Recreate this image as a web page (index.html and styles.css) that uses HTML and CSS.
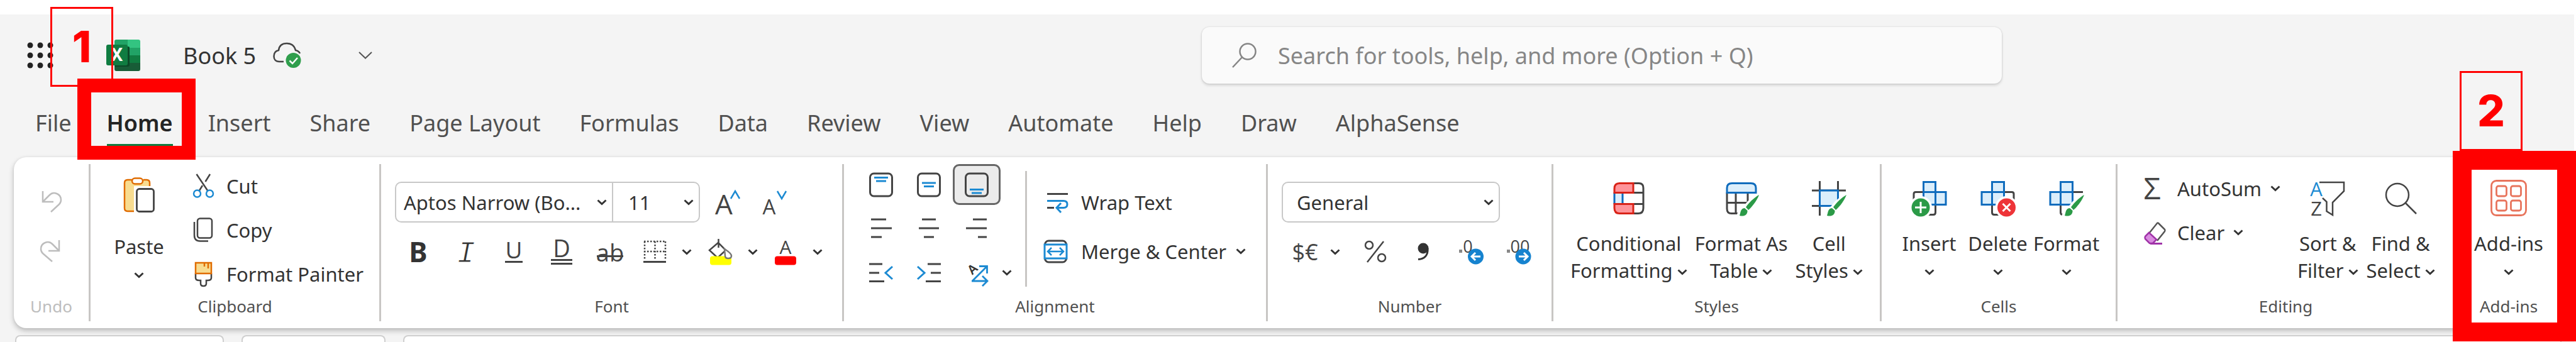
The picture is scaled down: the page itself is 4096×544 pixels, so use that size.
FILE: index.html
```html
<!DOCTYPE html>
<html lang="en">
<head>
<meta charset="utf-8">
<title>Book 5</title>
<link rel="stylesheet" href="styles.css">
</head>
<body>
<svg class="defs" aria-hidden="true">
  <symbol id="chev" viewBox="0 0 16 10"><path d="M1.5 1.5 8 7.5 14.5 1.5" fill="none" stroke="#333" stroke-width="3"/></symbol>
  <symbol id="brush" viewBox="0 0 56 58">
    <path d="M56 24 40 37 32 47 38 51 46 42Z M32 46C26 46 26 52 24 57 31 59 38 56 38 50Z" fill="#fff" stroke="#fff" stroke-width="7"/>
    <path d="M56 24C50 27 40 36 35 43.500L39 48C46 42 53 32 56 24Z" fill="#2b9a47"/>
    <path d="M33 45C26 46 27 52 25 57 32 59 38 56 37.500 49Z" fill="#2b9a47"/>
  </symbol>
</svg>

<div class="app">
  <header class="title">
    <div class="title-left">
      <button class="waffle" aria-label="App launcher">
        <svg width="42" height="42" viewBox="0 0 42 42" fill="#222"><circle cx="5" cy="5" r="4.500"/><circle cx="21" cy="5" r="4.500"/><circle cx="37" cy="5" r="4.500"/><circle cx="5" cy="21" r="4.500"/><circle cx="21" cy="21" r="4.500"/><circle cx="37" cy="21" r="4.500"/><circle cx="5" cy="37" r="4.500"/><circle cx="21" cy="37" r="4.500"/><circle cx="37" cy="37" r="4.500"/></svg>
      </button>
      <svg class="logo" width="54" height="50" viewBox="0 0 54 50">
        <path d="M16 0H34V13H13V3Q13 0 16 0Z" fill="#21a366"/><path d="M34 0H51Q54 0 54 3V13H34Z" fill="#33c481"/>
        <path d="M13 13H34V25H13Z" fill="#107c41"/><path d="M34 13H54V25H34Z" fill="#21a366"/>
        <path d="M34 25H54V37H34Z" fill="#107c41"/><path d="M13 25H34V37H54V47Q54 50 51 50H16Q13 50 13 47Z" fill="#185c37"/>
        <path d="M13 11H35Q37 11 37 13V40Q37 43 34 43H13Z" fill="#0b4a28"/>
        <rect y="8" width="34" height="33" rx="3" fill="#107c41"/>
        <text x="17" y="34" text-anchor="middle" class="logo-x">X</text>
      </svg>
      <span class="book">Book 5</span>
      <svg class="cloud" width="46" height="42" viewBox="0 0 46 42">
        <path d="M43 18Q41 14 36 13C34 5 29 2 22 2S10 5 9 13C4 14 1.500 18 1.500 22.500S4 31 10 31H17" fill="none" stroke="#444" stroke-width="2.500"/>
        <circle cx="32.500" cy="29" r="12" fill="#2f9e4c"/><path d="M26.500 29.500 31 34 39 25" fill="none" stroke="#fff" stroke-width="2.500"/>
      </svg>
      <button class="plain" aria-label="File menu"><svg width="22" height="12" viewBox="0 0 22 12"><path d="M1 1 11 10.500 21 1" fill="none" stroke="#555" stroke-width="2"/></svg></button>
    </div>
    <label class="search">
      <svg width="40" height="42" viewBox="0 0 40 42" fill="none" stroke="#858585" stroke-width="2.500"><circle cx="26" cy="15" r="12.500"/><path d="M17 24 2 40"/></svg>
      <input type="text" placeholder="Search for tools, help, and more (Option + Q)" aria-label="Search">
    </label>
  </header>

  <nav class="tabs">
    <button>File</button><button class="active">Home</button><button>Insert</button><button>Share</button><button>Page Layout</button><button>Formulas</button><button>Data</button><button>Review</button><button>View</button><button>Automate</button><button>Help</button><button>Draw</button><button>AlphaSense</button>
  </nav>

  <main class="ribbon">
    <section class="group undo">
      <div class="body">
        <button aria-label="Undo"><svg width="40" height="40" viewBox="0 0 40 40" fill="none" stroke="#bdbdbd" stroke-width="2.500"><path d="M6 3V20H23"/><path d="M6 20 17 9C23 3 35 7 35 17Q35 21 32 24L19 36"/></svg></button>
        <button aria-label="Redo"><svg width="40" height="40" viewBox="0 0 40 40" fill="none" stroke="#bdbdbd" stroke-width="2.500"><path d="M32 3V20H15"/><path d="M32 20 21 9C15 3 3 7 3 17Q3 21 6 24L21 37"/></svg></button>
      </div>
      <h2>Undo</h2>
    </section>

    <section class="group clipboard">
      <div class="body">
        <button class="big paste">
          <svg width="56" height="56" viewBox="0 0 56 56"><path d="M10 4H41Q46 4 46 9V55H10Q5 55 5 50V9Q5 4 10 4Z" fill="#f8dc90"/><path d="M17 4H10Q5 4 5 9V49Q5 54 10 54H21M35 4H40Q45 4 45 9V14" fill="none" stroke="#e06c00" stroke-width="2.500"/><rect x="17" y="1.500" width="17" height="9" rx="4.500" fill="#fff" stroke="#e06c00" stroke-width="2.500"/><path d="M20 14H56V56H20Z" fill="#fff"/><rect x="24.500" y="18.500" width="27" height="36" rx="4" fill="#fff" stroke="#444" stroke-width="2.800"/></svg>
          <span>Paste</span>
          <span class="line"><svg class="chev"><use href="#chev"/></svg></span>
        </button>
        <div class="stack">
          <button><svg width="40" height="40" viewBox="0 0 40 40" fill="none" stroke-width="2.500"><path d="M7.500 1 25 27M29 1 21.500 13M17 19 12 27" stroke="#444"/><circle cx="8.500" cy="32" r="5.500" stroke="#1c8ad2"/><circle cx="28.500" cy="32" r="5.500" stroke="#1c8ad2"/></svg>Cut</button>
          <button><svg width="40" height="40" viewBox="0 0 40 40" fill="none" stroke="#444" stroke-width="2.500"><rect x="9" y="1.500" width="23" height="31" rx="4"/><path d="M4 7V28Q4 37.500 13 37.500H26"/></svg>Copy</button>
          <button><svg width="40" height="40" viewBox="0 0 40 40" fill="none" stroke-width="2.500"><path d="M6 19V26Q6 30 12 30H14V35Q14 39 18.500 39T23 35V30H25Q31 30 31 26V19" stroke="#444"/><rect x="6" y="2" width="25" height="17" fill="#f8dc90" stroke="#e06c00"/><path d="M20 2V8M26 2V11" stroke="#e06c00"/></svg>Format Painter</button>
        </div>
      </div>
      <h2>Clipboard</h2>
    </section>

    <section class="group font">
      <div class="body">
        <div class="row">
          <div class="pair">
            <select class="face" aria-label="Font"><option>Aptos Narrow (Bo...</option></select>
            <select class="size" aria-label="Font size"><option>11</option></select>
          </div>
          <button class="grow" aria-label="Increase font size"><svg width="42" height="40" viewBox="0 0 42 40"><text x="14" y="39" class="lt" font-size="44" text-anchor="middle">A</text><path d="M25 14 32 2 39 14" fill="none" stroke="#1c8ad2" stroke-width="2.500"/></svg></button>
          <button aria-label="Decrease font size"><svg width="42" height="40" viewBox="0 0 42 40"><text x="11" y="39" class="lt" font-size="33" text-anchor="middle">A</text><path d="M24 2 31 14 38 2" fill="none" stroke="#1c8ad2" stroke-width="2.500"/></svg></button>
        </div>
        <div class="row tools">
          <button aria-label="Bold"><svg width="40" height="42" viewBox="0 0 40 42"><text x="20" y="37" class="bd" font-size="44" text-anchor="middle">B</text></svg></button>
          <button aria-label="Italic"><svg width="40" height="42" viewBox="0 0 40 42"><text x="20" y="37" class="it" font-size="48" text-anchor="middle">I</text></svg></button>
          <button aria-label="Underline"><svg width="40" height="42" viewBox="0 0 40 42"><text x="20" y="31" class="lt" font-size="37" text-anchor="middle">U</text><path d="M6 36.500H34" stroke="#444" stroke-width="3"/></svg></button>
          <button aria-label="Double underline"><svg width="40" height="42" viewBox="0 0 40 42"><text x="20" y="29" class="lt" font-size="38" text-anchor="middle">D</text><path d="M3 33.500H37M3 39.500H37" stroke="#444" stroke-width="3"/></svg></button>
          <button aria-label="Strikethrough"><svg width="42" height="42" viewBox="0 0 42 42"><text x="21" y="36" class="lt" font-size="38" text-anchor="middle">ab</text><path d="M0 27.500H42" stroke="#444" stroke-width="3"/></svg></button>
          <button class="split" aria-label="Borders"><svg width="40" height="42" viewBox="0 0 40 42" fill="none" stroke="#444" stroke-width="2.500"><path d="M3 4H38M3 20H38M4 4V34M20.500 4V34M37 4V34" stroke-dasharray="2.500 2.500"/><path d="M2 36.500H38" stroke-width="3"/></svg><svg class="chev"><use href="#chev"/></svg></button>
          <button class="split" aria-label="Fill color"><svg width="42" height="42" viewBox="0 0 42 42"><path d="M18 6 30 18 17 30 4 18ZM18.500 0V14" fill="#fff" stroke="#444" stroke-width="2.500"/><rect x="5" y="27.500" width="34" height="14" rx="4" fill="#ff0"/><path d="M28 16Q39 23 39 27T34 31 29 27Z" fill="#fff" stroke="#777" stroke-width="2.500"/></svg><svg class="chev"><use href="#chev"/></svg></button>
          <button class="split" aria-label="Font color"><svg width="40" height="42" viewBox="0 0 40 42"><text x="20" y="24" class="lt" font-size="30" text-anchor="middle">A</text><rect x="3" y="27.500" width="34" height="14" rx="4" fill="red"/></svg><svg class="chev"><use href="#chev"/></svg></button>
        </div>
      </div>
      <h2>Font</h2>
    </section>

    <section class="group align">
      <div class="body">
        <div class="grid">
          <button aria-label="Top align"><svg width="38" height="40" viewBox="0 0 38 40" fill="none" stroke-width="3"><rect x="1.500" y="2" width="35" height="36" rx="6" stroke="#444"/><path d="M8 8.500H30M11 14H27" stroke="#1c8ad2"/></svg></button>
          <button aria-label="Middle align"><svg width="38" height="40" viewBox="0 0 38 40" fill="none" stroke-width="3"><rect x="1.500" y="2" width="35" height="36" rx="6" stroke="#444"/><path d="M8 17H30M11 22.500H27" stroke="#1c8ad2"/></svg></button>
          <button class="on" aria-label="Bottom align" aria-pressed="true"><svg width="38" height="40" viewBox="0 0 38 40" fill="none" stroke-width="3"><rect x="1.500" y="2" width="35" height="36" rx="6" stroke="#444"/><path d="M8 27.500H30M11 33H27" stroke="#1c8ad2"/></svg></button>
          <span></span>
          <button aria-label="Align left"><svg width="40" height="40" viewBox="0 0 40 40" stroke="#444" stroke-width="3"><path d="M4 6H28M4 20H37M4 34H21"/></svg></button>
          <button aria-label="Center"><svg width="40" height="40" viewBox="0 0 40 40" stroke="#444" stroke-width="3"><path d="M9 6H31M4 20H36M12 34H28"/></svg></button>
          <button aria-label="Align right"><svg width="40" height="40" viewBox="0 0 40 40" stroke="#444" stroke-width="3"><path d="M14 6H36M3 20H36M22 34H36"/></svg></button>
          <span></span>
          <button aria-label="Decrease indent"><svg width="40" height="40" viewBox="0 0 40 40" fill="none" stroke="#444" stroke-width="3"><path d="M1 6H22M1 20H17M1 33.500H25"/><path d="M38 10 27 20 38 30" stroke="#1c8ad2"/></svg></button>
          <button aria-label="Increase indent"><svg width="40" height="40" viewBox="0 0 40 40" fill="none" stroke="#444" stroke-width="3"><path d="M18 6H39M23 20H39M15 33.500H39"/><path d="M2 10 13 20 2 30" stroke="#1c8ad2"/></svg></button>
          <button aria-label="Orientation"><svg width="40" height="44" viewBox="0 0 40 44" fill="none" stroke-width="2.800"><text x="8" y="23" class="bk" font-size="20" transform="rotate(-42 14 18)">A</text><path d="M13 35 36 12M24 11.500H36.500V23M12 35H36M29 27 37 35 29 43" stroke="#1c8ad2"/></svg></button>
          <button class="plain" aria-label="More orientation"><svg class="chev"><use href="#chev"/></svg></button>
        </div>
        <div class="rule"></div>
        <div class="wide">
          <button><svg width="40" height="40" viewBox="0 0 40 40" fill="none" stroke="#444" stroke-width="3"><path d="M6 6.500H39M6 28.500H17"/><path d="M6 17.500H32Q38 17.500 38 23T32 28.500H22M28 21 21 28.500 28 36" stroke="#1c8ad2"/></svg>Wrap Text</button>
          <button><svg width="40" height="40" viewBox="0 0 40 40" fill="none" stroke="#444" stroke-width="3"><rect x="2.500" y="3" width="34" height="34" rx="6"/><path d="M2 9H37V31H2Z" fill="#fff" stroke="#1c8ad2"/><path d="M8 20H31M13 14 7 20 13 26M26 14 32 20 26 26" stroke="#1c8ad2" stroke-width="2.500"/></svg>Merge &amp; Center<svg class="chev"><use href="#chev"/></svg></button>
        </div>
      </div>
      <h2>Alignment</h2>
    </section>

    <section class="group number">
      <div class="body">
        <select aria-label="Number format"><option>General</option></select>
        <div class="row tools">
          <button class="split" aria-label="Accounting format"><svg width="44" height="42" viewBox="0 0 44 42"><text x="22" y="34" class="lt" font-size="36" text-anchor="middle">$€</text></svg><svg class="chev"><use href="#chev"/></svg></button>
          <button aria-label="Percent"><svg width="40" height="42" viewBox="0 0 40 42" fill="none" stroke="#444" stroke-width="2.500"><path d="M33 4 7 37"/><circle cx="10" cy="10" r="6"/><circle cx="30" cy="30" r="6"/></svg></button>
          <button aria-label="Comma style"><svg width="40" height="42" viewBox="0 0 40 42"><circle cx="20" cy="15" r="8.500" fill="#333"/><path d="M27 15C28 26 22 32 12 32.500" fill="none" stroke="#333" stroke-width="3"/></svg></button>
          <button aria-label="Increase decimal"><svg width="40" height="42" viewBox="0 0 40 42"><rect x="1" y="17" width="5" height="5" fill="#888"/><text x="15" y="22" class="lt" font-size="27" text-anchor="middle">0</text><circle cx="27.500" cy="28" r="12.500" fill="#1683cf"/><path d="M35 28H22M27 22 21 28 27 34" fill="none" stroke="#fff" stroke-width="3"/></svg></button>
          <button aria-label="Decrease decimal"><svg width="40" height="42" viewBox="0 0 40 42"><rect x="1" y="17" width="5" height="5" fill="#888"/><text x="22" y="22" class="lt" font-size="27" text-anchor="middle">00</text><circle cx="27" cy="28" r="12.500" fill="#1683cf"/><path d="M20 28H33M28 22 34 28 28 34" fill="none" stroke="#fff" stroke-width="3"/></svg></button>
        </div>
      </div>
      <h2>Number</h2>
    </section>

    <section class="group styles">
      <div class="body">
        <button class="big">
          <svg width="56" height="58" viewBox="0 0 56 58" fill="none" stroke-width="3"><path d="M36 5.500H44Q51 5.500 51 13V45Q51 53.500 43 53.500H36M36 20.500H51M36 38.500H51M17 20.500H36M17 38.500H36" stroke="#444"/><path d="M4 20H17V39H4Z" fill="#dbeefb"/><path d="M5 20V39M18 20V39" stroke="#0f6cbd"/><path d="M35 5.500H13Q5 5.500 5 14V20.500H35ZM35 38.500H5V45Q5 53.500 13 53.500H35Z" fill="#ff949a" stroke="#d92318"/></svg>
          <span>Conditional</span><span class="line">Formatting<svg class="chev"><use href="#chev"/></svg></span>
        </button>
        <button class="big">
          <svg width="56" height="58" viewBox="0 0 56 58" fill="none" stroke-width="3"><path d="M5 20V46Q5 53.500 12 53.500H24M19 20V54M38 20V36.500M5 36.500H40" stroke="#444"/><path d="M13 5.500H43Q51 5.500 51 13V20.500H5V13Q5 5.500 13 5.500Z" fill="#dbeefb" stroke="#0f6cbd"/><use href="#brush"/></svg>
          <span>Format As</span><span class="line">Table<svg class="chev"><use href="#chev"/></svg></span>
        </button>
        <button class="big">
          <svg width="56" height="58" viewBox="0 0 56 58" fill="none" stroke-width="3"><path d="M13.500 2V57M42.500 2V18M1 17H55M1 41.500H14" stroke="#444"/><path d="M13.500 17H42.500V41.500H13.500Z" fill="#dbeefb" stroke="#0f6cbd"/><use href="#brush"/></svg>
          <span>Cell</span><span class="line">Styles<svg class="chev"><use href="#chev"/></svg></span>
        </button>
      </div>
      <h2>Styles</h2>
    </section>

    <section class="group cells">
      <div class="body">
        <button class="big">
          <svg width="56" height="60" viewBox="0 0 56 60" fill="none" stroke-width="3"><path d="M19 19.500H6Q3 19.500 3 22.500V34M37.500 40V52Q37.500 55.500 34 55.500H24" stroke="#444"/><path d="M18.500 3.500H37.500V39.500H18.500ZM18.500 19.500H54V39.500H18.500Z" fill="#dbeefb" stroke="#0f6cbd"/><path d="M37.500 19.500V39.500" stroke="#0f6cbd"/><circle cx="14" cy="44" r="18" fill="#fff"/><circle cx="14" cy="44" r="14.500" fill="#2b9a47"/><path d="M14 35V53M5 44H23" stroke="#fff"/></svg>
          <span>Insert</span><span class="line"><svg class="chev"><use href="#chev"/></svg></span>
        </button>
        <button class="big">
          <svg width="56" height="60" viewBox="0 0 56 60" fill="none" stroke-width="3"><path d="M37 19.500H50Q53 19.500 53 22.500V34M18.500 40V52Q18.500 55.500 22 55.500H32" stroke="#444"/><path d="M18.500 3.500H37.500V39.500H18.500ZM2 19.500H37.500V39.500H2Z" fill="#dbeefb" stroke="#0f6cbd"/><path d="M18.500 19.500V39.500" stroke="#0f6cbd"/><circle cx="41.500" cy="44" r="18" fill="#fff"/><circle cx="41.500" cy="44" r="14.500" fill="#ee3438"/><path d="M35.500 38 47.500 50M47.500 38 35.500 50" stroke="#fff"/></svg>
          <span>Delete</span><span class="line"><svg class="chev"><use href="#chev"/></svg></span>
        </button>
        <button class="big">
          <svg width="56" height="60" viewBox="0 0 56 60" fill="none" stroke-width="3"><path d="M37 19.500H54M18.500 40V52Q18.500 55.500 22 55.500" stroke="#444"/><path d="M18.500 3.500H37.500V39.500H18.500ZM2 19.500H37.500V39.500H2Z" fill="#dbeefb" stroke="#0f6cbd"/><path d="M18.500 19.500V39.500" stroke="#0f6cbd"/><use href="#brush" width="56" height="58"/></svg>
          <span>Format</span><span class="line"><svg class="chev"><use href="#chev"/></svg></span>
        </button>
      </div>
      <h2>Cells</h2>
    </section>

    <section class="group editing">
      <div class="body">
        <div class="stack">
          <button><svg width="40" height="40" viewBox="0 0 40 40"><text x="18" y="37" class="lt" font-size="48" text-anchor="middle">Σ</text></svg>AutoSum<svg class="chev"><use href="#chev"/></svg></button>
          <button><svg width="40" height="40" viewBox="0 0 40 40" fill="none" stroke-width="2.500"><path d="M14 20 26 5Q27 4 28 5L38 15Q39 16 38 18L26 33" stroke="#555"/><path d="M13 20 7 26Q6 28 7 30L14 37H19L25 31Z" fill="#d98be0" stroke="#a033a8"/><path d="M15 37.500H34" stroke="#a033a8" stroke-width="3"/></svg>Clear<svg class="chev"><use href="#chev"/></svg></button>
        </div>
        <button class="big">
          <svg width="56" height="58" viewBox="0 0 56 58"><text x="10" y="26" class="bl" font-size="31" text-anchor="middle">A</text><text x="10" y="57" class="lt" font-size="31" text-anchor="middle">Z</text><path d="M15 4H54V18L36 36V56L26.500 50V35L20 29" fill="none" stroke="#444" stroke-width="2.500"/></svg>
          <span>Sort &amp;</span><span class="line">Filter<svg class="chev"><use href="#chev"/></svg></span>
        </button>
        <button class="big">
          <svg width="56" height="58" viewBox="0 0 56 58" fill="none" stroke="#444" stroke-width="2.500"><circle cx="23" cy="24" r="18"/><path d="M36 37 53 54"/></svg>
          <span>Find &amp;</span><span class="line">Select<svg class="chev"><use href="#chev"/></svg></span>
        </button>
      </div>
      <h2>Editing</h2>
    </section>

    <section class="group addins">
      <div class="body">
        <button class="big">
          <svg width="58" height="58" viewBox="0 0 58 58" fill="none" stroke="#e8745c" stroke-width="2.800"><rect x="1.500" y="1.500" width="55" height="55" rx="8"/><rect x="9.500" y="10" width="16" height="16" rx="3"/><rect x="32.500" y="10" width="16" height="16" rx="3"/><rect x="9.500" y="33" width="16" height="16" rx="3"/><rect x="32.500" y="33" width="16" height="16" rx="3"/></svg>
          <span>Add-ins</span><span class="line"><svg class="chev"><use href="#chev"/></svg></span>
        </button>
      </div>
      <h2>Add-ins</h2>
    </section>
  </main>

  <div class="formula"><div></div><div></div><div></div></div>
</div>

<div class="mark num one">1</div>
<div class="mark frame home"></div>
<div class="mark num two">2</div>
<div class="mark frame add"></div>
</body>
</html>
```
FILE: styles.css
```css
* { box-sizing: border-box; }
html, body { height: 100%; }
body {
  margin: 0;
  display: flex;
  flex-direction: column;
  position: relative;
  overflow: hidden;
  background: #fff;
  color: #333;
  font-family: "Noto Sans", "Open Sans", sans-serif;
  font-size: 31px;
}
button, select, input { font: inherit; color: inherit; }
button {
  display: flex;
  align-items: center;
  justify-content: center;
  padding: 0;
  border: 0;
  background: none;
  white-space: nowrap;
}
svg { display: block; flex: none; overflow: visible; }
.defs { position: absolute; width: 0; height: 0; }
.chev { width: 16px; height: 10px; }

.lt { font-family: "Open Sans", "Noto Sans", sans-serif; fill: #444; }
.bl { font-family: "Open Sans", "Noto Sans", sans-serif; fill: #1c8ad2; }
.bk { font-weight: 600; fill: #333; }
.bd { font-weight: 700; fill: #333; }
.it { font-family: "Liberation Mono", monospace; font-style: italic; fill: #333; stroke: #fff; stroke-width: 1px; }
.logo-x { font-size: 28px; font-weight: 700; fill: #fff; }

.app {
  flex: 1;
  display: flex;
  flex-direction: column;
  margin: 23px 3px 0 0;
  background: #f4f4f4;
}

/* title bar */
.title {
  display: grid;
  grid-template-columns: 1911fr 1272fr 910fr;
  align-items: center;
  height: 130px;
  font-size: 36px;
}
.title-left { display: flex; align-items: center; padding-left: 43px; }
.logo { margin-left: 84px; }
.book { margin-left: 68px; }
.cloud { margin: 0 90px 0 27px; }
.search {
  display: flex;
  align-items: center;
  gap: 34px;
  height: 90px;
  padding-left: 47px;
  border-radius: 12px;
  background: #fafafa;
  box-shadow: 0 0 3px rgba(0, 0, 0, .14), 0 3px 4px rgba(0, 0, 0, .12);
}
.search input {
  flex: 1;
  min-width: 0;
  height: 80px;
  padding: 0;
  border: 0;
  outline: 0;
  background: none;
}
.search input::placeholder { color: #868686; opacity: 1; }

/* tabs */
.tabs { display: flex; gap: 62px; padding: 18px 0 15px 56px; }
.tabs button {
  padding-bottom: 8px;
  border-bottom: 6px solid transparent;
  color: #505050;
  font-size: 36px;
  line-height: 50px;
}
.tabs .active { margin: 0 -6px; border-color: #107c41; color: #242424; font-weight: 600; }

/* ribbon */
.ribbon {
  display: grid;
  grid-template-columns: 122fr 462fr 736fr 674fr 454fr 522fr 375fr 538fr 168fr;
  margin: 0 20px 0 22px;
  padding: 11px 0;
  border-radius: 20px;
  background: #fff;
  box-shadow: 0 4px 8px rgba(0, 0, 0, .24), 0 0 4px rgba(0, 0, 0, .06);
}
.group {
  display: flex;
  flex-direction: column;
  min-width: 0;
  height: 250px;
  padding-bottom: 9px;
  border-right: 3px solid #c8c6c4;
}
.group:last-child { border-right: 0; }
.group h2 {
  margin: 0;
  color: #505050;
  font-size: 26px;
  font-weight: 400;
  line-height: 30px;
  text-align: center;
}
.body { flex: 1; display: flex; align-items: flex-start; }

.big {
  flex-direction: column;
  padding-top: 25px;
  line-height: 43px;
}
.big > svg { height: 58px; margin-bottom: 22px; }
.line { display: flex; align-items: center; gap: 7px; height: 43px; }
.line .chev { margin-top: 5px; }

.stack button { gap: 15px; height: 70px; justify-content: flex-start; }
.row { display: flex; align-items: center; }
.tools { gap: 36px; margin-top: 26px; }
.split { gap: 23px; }

select {
  height: 65px;
  border: 2px solid #c8c8c8;
  border-radius: 10px;
  outline: 0;
  appearance: none;
  background: #fff url("data:image/svg+xml,%3Csvg xmlns='http://www.w3.org/2000/svg' width='16' height='10'%3E%3Cpath d='M1.500 1.500 8 7.500 14.500 1.500' fill='none' stroke='%23333' stroke-width='3'/%3E%3C/svg%3E") no-repeat right 8px center;
}

.undo .body { flex-direction: column; align-items: center; gap: 38px; padding-top: 40px; }
.undo h2 { color: #bdbdbd; }

.clipboard .body { padding-left: 32px; }
.paste { width: 90px; margin-right: 39px; padding-top: 21px; }
.paste > svg { height: 56px; margin-bottom: 33px; }

.font .body, .number .body { flex-direction: column; padding: 28px 0 0 22px; }
.face { width: 347px; padding-left: 12px; border-radius: 10px 0 0 10px; }
.size { width: 140px; margin-left: -2px; padding-left: 24px; border-radius: 0 10px 10px 0; }
.pair { display: flex; }
.grow { margin: 0 33px 0 24px; }
.font .tools { padding-left: 17px; }
.font .split { margin-right: -12px; }
.font .split:nth-child(6) { margin-left: -6px; }

.grid {
  display: grid;
  grid-template-columns: repeat(3, 76px) 20px;
  grid-template-rows: 65px 74px 68px;
  margin-left: 21px;
}
.grid .on { border: 3px solid #666; border-radius: 10px; background: #ebebeb; }
.rule { width: 3px; height: 184px; margin: 11px 26px 0 19px; background: #c8c6c4; }
.wide { padding-top: 22px; }
.wide button { gap: 20px; height: 78px; }
.wide .chev { margin-left: -5px; }

.number select { width: 347px; padding-left: 22px; }
.number .tools { padding-left: 15px; }
.number .split { gap: 18px; }

.styles .body { gap: 12px; padding-left: 27px; }
.cells .body { padding-left: 21px; }
.cells .big { width: 109px; }
.cells .big > svg { height: 60px; margin-bottom: 20px; }

.editing .stack { width: 236px; padding-top: 4px; }
.editing .body { padding-left: 37px; gap: 13px; }
.editing .stack button { gap: 18px; }
.editing .stack .chev { margin-left: -4px; }

.addins .body { justify-content: center; }

/* formula bar, cut off by the window */
.formula {
  flex: 1;
  display: grid;
  grid-template-columns: 332fr 229fr 3430fr;
  gap: 28px;
  padding: 11px 20px 0 24px;
}
.formula div {
  border: 2px solid #cfcfcf;
  border-bottom: 0;
  border-radius: 8px 8px 0 0;
  background: #fff;
}

/* call-outs over the window */
.mark { position: absolute; border: 3px solid red; }
.num {
  display: flex;
  align-items: center;
  justify-content: center;
  width: 100px;
  height: 127px;
  color: red;
  font-family: Inter, sans-serif;
  font-size: 69px;
  font-weight: 800;
  line-height: 1;
}
.one { left: 80px; top: 11px; }
.two { right: 85px; top: 113px; }
.home { left: 123px; top: 125px; width: 188px; height: 129px; border-width: 22px; }
.add { right: 0; top: 240px; width: 196px; height: 303px; border-width: 30px; }
```
